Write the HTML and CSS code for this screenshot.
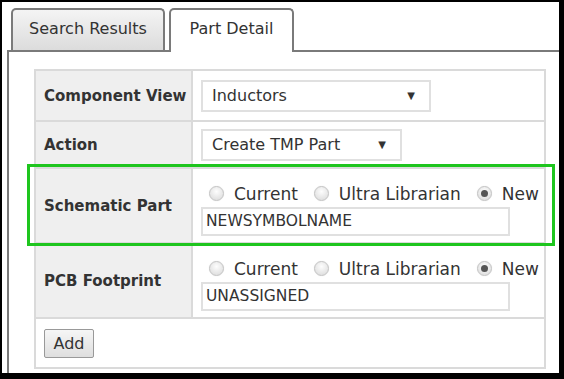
FILE: index.html
```html
<!DOCTYPE html>
<html lang="en">
<head>
  <meta charset="utf-8">
  <title>Part Detail</title>
  <link rel="stylesheet" href="styles.css">
</head>
<body>
<div class="frame">
  <ul class="tabs">
    <li class="tab">Search Results</li>
    <li class="tab active">Part Detail</li>
  </ul>
  <div class="panel">
    <table class="detail">
      <tr class="row-view">
        <th>Component View</th>
        <td><div class="select wide"><span>Inductors</span><i>&#9660;</i></div></td>
      </tr>
      <tr class="row-action">
        <th>Action</th>
        <td><div class="select"><span>Create TMP Part</span><i>&#9660;</i></div></td>
      </tr>
      <tr class="row-part">
        <th>Schematic Part</th>
        <td>
          <div class="choices">
            <span class="radio"></span><span class="lbl">Current</span>
            <span class="radio"></span><span class="lbl">Ultra Librarian</span>
            <span class="radio on"></span><span class="lbl">New</span>
          </div>
          <div class="field">NEWSYMBOLNAME</div>
        </td>
      </tr>
      <tr class="row-part">
        <th>PCB Footprint</th>
        <td>
          <div class="choices">
            <span class="radio"></span><span class="lbl">Current</span>
            <span class="radio"></span><span class="lbl">Ultra Librarian</span>
            <span class="radio on"></span><span class="lbl">New</span>
          </div>
          <div class="field">UNASSIGNED</div>
        </td>
      </tr>
      <tr class="row-add">
        <td colspan="2"><button class="btn">Add</button></td>
      </tr>
    </table>
    <div class="highlight"></div>
  </div>
</div>
</body>
</html>
```

FILE: styles.css
```css
html, body { margin: 0; padding: 0; }
body {
  background: #000;
  font-family: "DejaVu Sans", Verdana, sans-serif;
  font-size: 14px;
  color: #333;
}
.frame {
  margin: 2px 5px 0 2px;
  height: 371px;
  background: #fff;
  overflow: hidden;
}
.tabs {
  display: flex;
  align-items: flex-end;
  gap: 4px;
  list-style: none;
  margin: 0;
  padding: 5px 0 0 9px;
  height: 43px;
}
.tab {
  box-sizing: border-box;
  width: 154px;
  height: 42px;
  border: 2px solid #7a7a7a;
  border-bottom: none;
  border-radius: 5px 5px 0 0;
  background: linear-gradient(#f4f4f4, #dcdcdc);
  text-align: center;
  line-height: 38px;
  font-size: 16px;
}
.tab.active {
  width: 125px;
  height: 44px;
  background: #fff;
  position: relative;
  margin-bottom: -2px;
  z-index: 1;
}
.panel {
  position: relative;
  margin-left: 5px;
  border-top: 2px solid #7a7a7a;
  border-left: 2px solid #7a7a7a;
  height: 330px;
  padding: 17px 0 0 25px;
}
.detail {
  border-collapse: collapse;
  width: 512px;
  table-layout: fixed;
}
.detail th, .detail td {
  border: 2px solid #dadada;
  padding: 0 0 0 8px;
}
.detail th {
  width: 147px;
  background: #efefef;
  text-align: left;
  font-size: 15px;
  font-weight: bold;
}
.row-view { height: 51px; }
.row-action { height: 47px; }
.row-part { height: 75px; }
.row-part td {
  vertical-align: top;
  padding-top: 11px;
}
.row-add { height: 50px; }
.select {
  box-sizing: border-box;
  width: 201px;
  height: 32px;
  border: 2px solid #e0e0e0;
  display: flex;
  align-items: center;
  justify-content: space-between;
  padding: 0 14px 0 9px;
  font-size: 16px;
}
.select.wide { width: 230px; }
.select i {
  font-style: normal;
  font-size: 10px;
  color: #333;
}
.choices {
  display: flex;
  align-items: center;
  padding-left: 8px;
  height: 27px;
  font-size: 17px;
  white-space: nowrap;
}
.radio {
  flex-shrink: 0;
  box-sizing: border-box;
  width: 15px;
  height: 15px;
  border-radius: 50%;
  border: 1px solid #c4c4c4;
  background: radial-gradient(circle at 50% 35%, #fdfdfd, #d8d8d8);
  box-shadow: 0 0 1px #ddd;
  margin-right: 10px;
  position: relative;
}
.radio.on::after {
  content: "";
  position: absolute;
  left: 3px; top: 3px;
  width: 7px; height: 7px;
  border-radius: 50%;
  background: #555;
}
.lbl { flex-shrink: 0; margin-right: 16px; }
.field {
  box-sizing: border-box;
  width: 309px;
  height: 29px;
  border: 2px solid #e0e0e0;
  padding: 0 0 0 3px;
  line-height: 25px;
  font-size: 15.5px;
}
.btn {
  font-family: inherit;
  font-size: 16px;
  color: #333;
  width: 50px;
  height: 29px;
  border: 1px solid #999;
  border-radius: 2px;
  background: linear-gradient(#f6f6f6, #dedede);
  padding: 0;
}
.highlight {
  position: absolute;
  left: 18px;
  top: 112px;
  width: 522px;
  height: 76px;
  border: 3px solid #1ec51e;
}
```
